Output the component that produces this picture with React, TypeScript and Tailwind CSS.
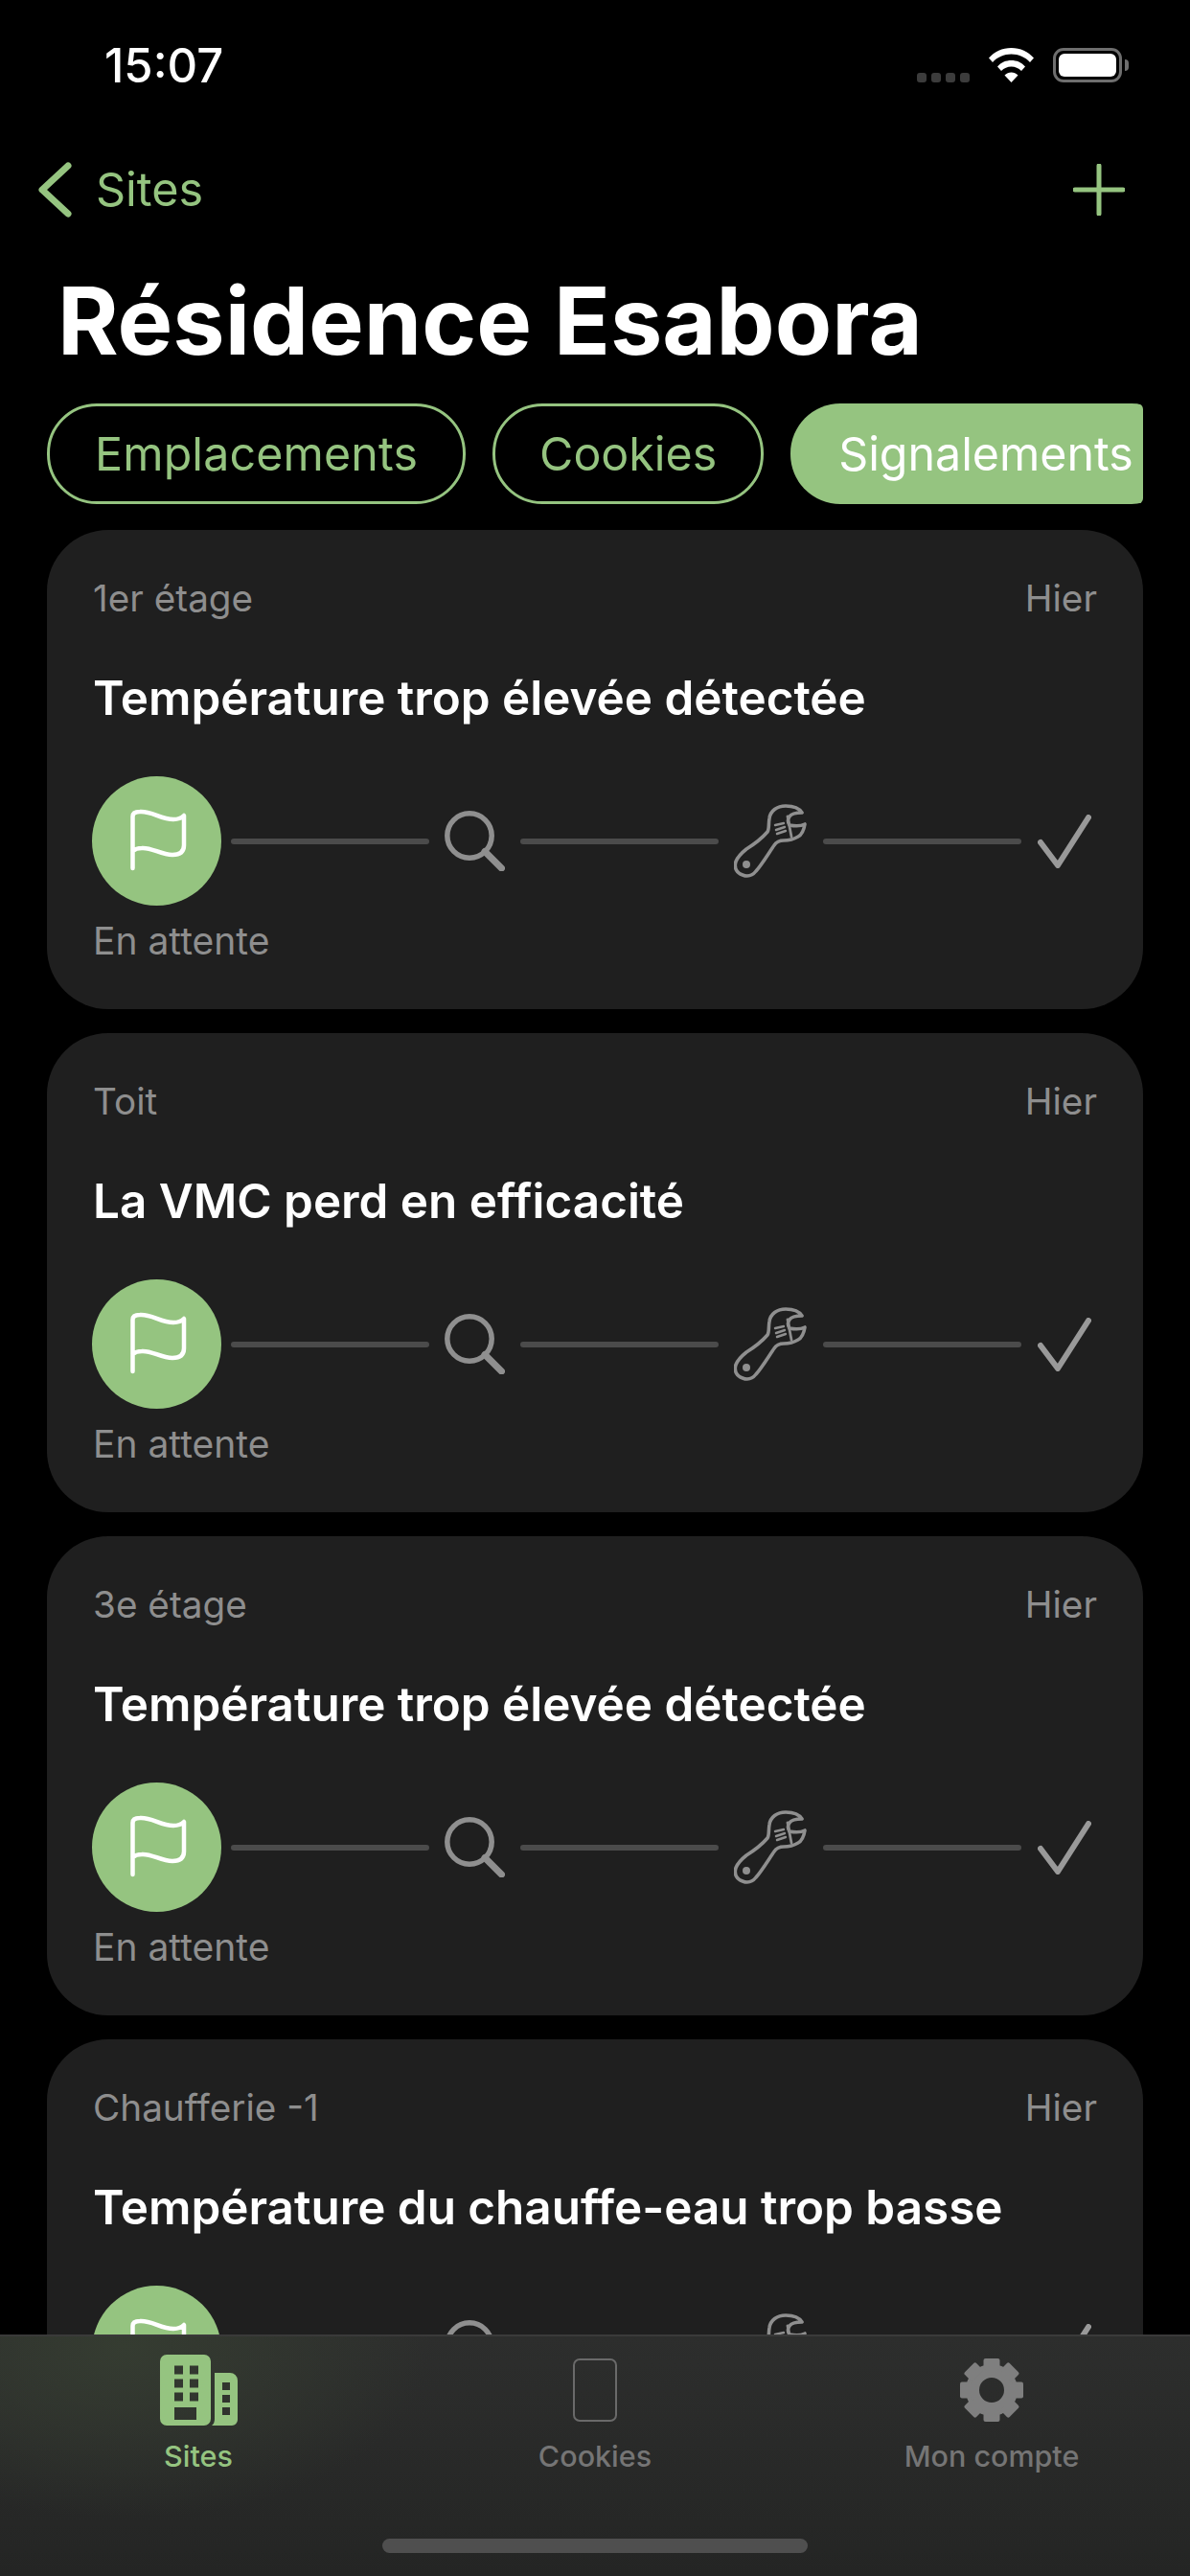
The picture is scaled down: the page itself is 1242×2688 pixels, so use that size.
const GREEN = "#95c480";

const cards = [
  { place: "1er étage", title: "Température trop élevée détectée", status: "En attente" },
  { place: "Toit", title: "La VMC perd en efficacité", status: "En attente" },
  { place: "3e étage", title: "Température trop élevée détectée", status: "En attente" },
  { place: "Chaufferie -1", title: "Température du chauffe-eau trop basse" },
];

function Flag() {
  return (
    <svg width="135" height="135" viewBox="0 0 135 135" fill="none" stroke="#fff" strokeWidth="4.5" strokeLinecap="round" strokeLinejoin="round">
      <path d="M42.5 96V42Q42.5 37 50 37C62 36 72 45 85 45Q92 45 96 41V72Q96 82 84 82C72 82 62 74 52 75Q46 75 42.5 78" />
    </svg>
  );
}

function Search() {
  return (
    <svg width="63" height="63" viewBox="0 0 63 63" fill="none" stroke="#8f8f8f" strokeWidth="5.5" strokeLinecap="round" className="shrink-0">
      <circle cx="26" cy="26" r="23.2" />
      <path d="M42 42.500L59.500 60" strokeWidth="7" />
    </svg>
  );
}

function Wrench() {
  return (
    <svg width="76" height="77" viewBox="0 0 76 77" fill="none" stroke="#8f8f8f" strokeWidth="3.6" strokeLinecap="round" strokeLinejoin="round" className="shrink-0">
      <path d="M54 2C62 2 68 4 71 9C65 9 60 10 58 13C56 16 56 19 58 22C63 23 70 23 74 21C73 27 71 32 67 34C62 37 58 38 52 38C47 38 44 40 42 43C37 50 30 62 23 70C19 75 14 76 9 74C3 72 0 67 2 60C4 55 8 51 13 47C21 42 29 36 35 29C37 26 36 20 37 15C38 7 45 2 54 2Z" />
      <path d="M56 13L60 34" strokeWidth="2.8" />
      <path d="M43 22L52 20M44 27L53 24M45 31L54 28" strokeWidth="2.4" />
      <circle cx="13" cy="63" r="4" fill="#8f8f8f" stroke="none" />
    </svg>
  );
}

function Check() {
  return (
    <svg width="56" height="56" viewBox="0 0 56 56" fill="none" stroke="#999" strokeWidth="6" strokeLinecap="round" strokeLinejoin="round" className="shrink-0">
      <path d="M3 29L21 53L53 3" />
    </svg>
  );
}

function Line() {
  return <div className="h-[6px] w-[207px] shrink-0 rounded-full bg-[#4b4b4b]" />;
}

function Card({ place, title, status }: { place: string; title: string; status?: string }) {
  return (
    <div className="h-[500px] shrink-0 rounded-[64px] bg-[#1f1f1f] px-[48px] pt-[47px]">
      <div className="flex h-[48px] items-center justify-between text-[38.700px] text-[#8e8e8e]">
        <span>{place}</span>
        <span>Hier</span>
      </div>
      <div className="mt-[56px] flex h-[48px] items-center text-[49.400px] font-semibold whitespace-nowrap text-white">{title}</div>
      <div className="mt-[58px] -ml-px flex h-[135px] items-center">
        <div className="h-[135px] w-[135px] shrink-0 rounded-full bg-[#95c480]">
          <Flag />
        </div>
        <div className="ml-[10px]"><Line /></div>
        <div className="ml-[16px]"><Search /></div>
        <div className="ml-[16px]"><Line /></div>
        <div className="ml-[16px]"><Wrench /></div>
        <div className="ml-[17px]"><Line /></div>
        <div className="ml-[17px]"><Check /></div>
      </div>
      {status && <div className="mt-[13px] flex h-[48px] items-center text-[39px] text-[#8e8e8e]">{status}</div>}
    </div>
  );
}

function Pill({ label, active, narrow }: { label: string; active?: boolean; narrow?: boolean }) {
  if (active) {
    return (
      <div className="flex h-[105px] shrink-0 items-center rounded-[52px] bg-[#95c480] px-[50px] pt-[2px] text-[48.300px] text-white">{label}</div>
    );
  }
  return (
    <div
      className={
        narrow
          ? "flex h-[105px] shrink-0 items-center rounded-[52px] border-[3px] border-[#95c480] px-[46px] pt-[2px] text-[48.300px] text-[#95c480]"
          : "flex h-[105px] shrink-0 items-center rounded-[52px] border-[3px] border-[#95c480] px-[47px] pt-[2px] text-[48.300px] tracking-[0.15px] text-[#95c480]"
      }
    >
      {label}
    </div>
  );
}

function Building() {
  return (
    <svg width="81" height="74" viewBox="0 0 81 74" fill={GREEN}>
      <path
        fillRule="evenodd"
        d="M7 0H46A7 7 0 0 1 53 7V67A7 7 0 0 1 46 74H7A7 7 0 0 1 0 67V7A7 7 0 0 1 7 0ZM15 11.500V20.500H24V11.500ZM31 11.500V20.500H40V11.500ZM15 25.500V34.500H24V25.500ZM31 25.500V34.500H40V25.500ZM15 39.500V48.500H24V39.500ZM31 39.500V48.500H40V39.500ZM15 55V68H38V55Z"
      />
      <path
        fillRule="evenodd"
        d="M57 19H73A8 8 0 0 1 81 27V68A6 6 0 0 1 75 74H54Q57 72 57 67ZM65 29V37H73V29ZM65 42V50H73V42ZM65 55V63H73V55Z"
      />
    </svg>
  );
}

function Phone() {
  return <div className="h-[66px] w-[46px] rounded-[7px] border-2 border-[#6a6a6a]" />;
}

function Gear() {
  const teeth = [0, 45, 90, 135, 180, 225, 270, 315];
  return (
    <svg width="66" height="66" viewBox="0 0 66 66" fill="#7f7f7f">
      <circle cx="33" cy="33" r="20" fill="none" stroke="#7f7f7f" strokeWidth="14" />
      {teeth.map((a) => (
        <rect key={a} x="24.500" y="0" width="17" height="12" rx="2" transform={`rotate(${a} 33 33)`} />
      ))}
    </svg>
  );
}

function Tab({ label, active, children }: { label: string; active?: boolean; children: React.ReactNode }) {
  return (
    <div className="flex flex-col items-center">
      <div className="flex h-[74px] items-center">{children}</div>
      <div className={active ? "mt-[14px] text-[30.500px] leading-[36px] font-medium text-[#95c480]" : "mt-[14px] text-[30.500px] leading-[36px] font-medium text-[#757575]"}>
        {label}
      </div>
    </div>
  );
}

export default function App() {
  return (
    <div className="flex h-[2688px] w-[1242px] flex-col overflow-hidden bg-black font-['Inter','Liberation_Sans',sans-serif]">
      <div className="flex h-[135px] shrink-0 items-center justify-between pr-[64px] pl-[109px]">
        <span className="mt-[2px] text-[49px] font-medium text-white">15:07</span>
        <div className="flex items-center">
          <div className="mt-[26px] flex gap-[5px]">
            <div className="h-[10px] w-[10px] rounded-[3px] bg-[#3c3c3c]" />
            <div className="h-[10px] w-[10px] rounded-[3px] bg-[#3c3c3c]" />
            <div className="h-[10px] w-[10px] rounded-[3px] bg-[#3c3c3c]" />
            <div className="h-[10px] w-[10px] rounded-[3px] bg-[#3c3c3c]" />
          </div>
          <svg width="47" height="36" viewBox="0 0 47 36" fill="#fff" className="ml-[20px]">
            <path d="M23.500 0C33 0 41 4 47 10.500L43 15C38 9.500 31 6.500 23.500 6.500C16 6.500 9 9.500 4 15L0 10.500C6 4 14 0 23.500 0Z" />
            <path d="M23.500 13C29 13 34 15 38 19.500L34 24C31 21 27.500 19.500 23.500 19.500C19.500 19.500 16 21 13 24L9 19.500C13 15 18 13 23.500 13Z" />
            <path d="M23.500 25.500C26 25.500 28.500 26.500 30.500 28.500L23.500 36L16.500 28.500C18.500 26.500 21 25.500 23.500 25.500Z" />
          </svg>
          <div className="ml-[20px] flex items-center">
            <div className="h-[36px] w-[72px] rounded-[11px] border-[3px] border-[#6e6e6e] p-[3px]">
              <div className="h-full w-full rounded-[6px] bg-white" />
            </div>
            <div className="ml-[3px] h-[12px] w-[4px] rounded-r-[4px] bg-[#6e6e6e]" />
          </div>
        </div>
      </div>

      <div className="flex h-[126px] shrink-0 items-center justify-between pr-[68px] pl-[39px] text-[#95c480]">
        <div className="flex items-center">
          <svg width="36" height="58" viewBox="0 0 36 58" fill="none" stroke={GREEN} strokeWidth="7" strokeLinecap="round" strokeLinejoin="round">
            <path d="M32 4L5 29L32 54" />
          </svg>
          <span className="ml-[25px] text-[48.500px]">Sites</span>
        </div>
        <svg width="54" height="54" viewBox="0 0 54 54" fill="none" stroke={GREEN} strokeWidth="5" strokeLinecap="round">
          <path d="M27 2V52M2 27H52" />
        </svg>
      </div>

      <div className="flex h-[160px] shrink-0 items-center pb-[12px] pl-[60px] text-[97px] font-bold whitespace-nowrap text-white">Résidence Esabora</div>

      <div className="mx-[49px] flex shrink-0 gap-[28px] overflow-hidden rounded-r-[6px]">
        <Pill label="Emplacements" />
        <Pill label="Cookies" narrow />
        <Pill label="Signalements" active />
      </div>

      <div className="flex min-h-0 flex-1 flex-col gap-[25px] overflow-hidden px-[49px] pt-[27px]">
        {cards.map((c, i) => (
          <Card key={i} place={c.place} title={c.title} status={c.status} />
        ))}
      </div>

      <div className="flex h-[252px] shrink-0 flex-col border-t-2 border-[#3a3a3a] bg-[radial-gradient(ellipse_320px_180px_at_130px_10px,#353c31_0%,rgba(53,60,49,0)_100%),linear-gradient(to_bottom,#2d2e2d,#242524)]">
        <div className="grid grid-cols-3 pt-[19px]">
          <Tab label="Sites" active>
            <Building />
          </Tab>
          <Tab label="Cookies">
            <Phone />
          </Tab>
          <Tab label="Mon compte">
            <Gear />
          </Tab>
        </div>
        <div className="mx-auto mt-[68px] h-[15px] w-[444px] rounded-full bg-[#4f4f4f]" />
      </div>
    </div>
  );
}
